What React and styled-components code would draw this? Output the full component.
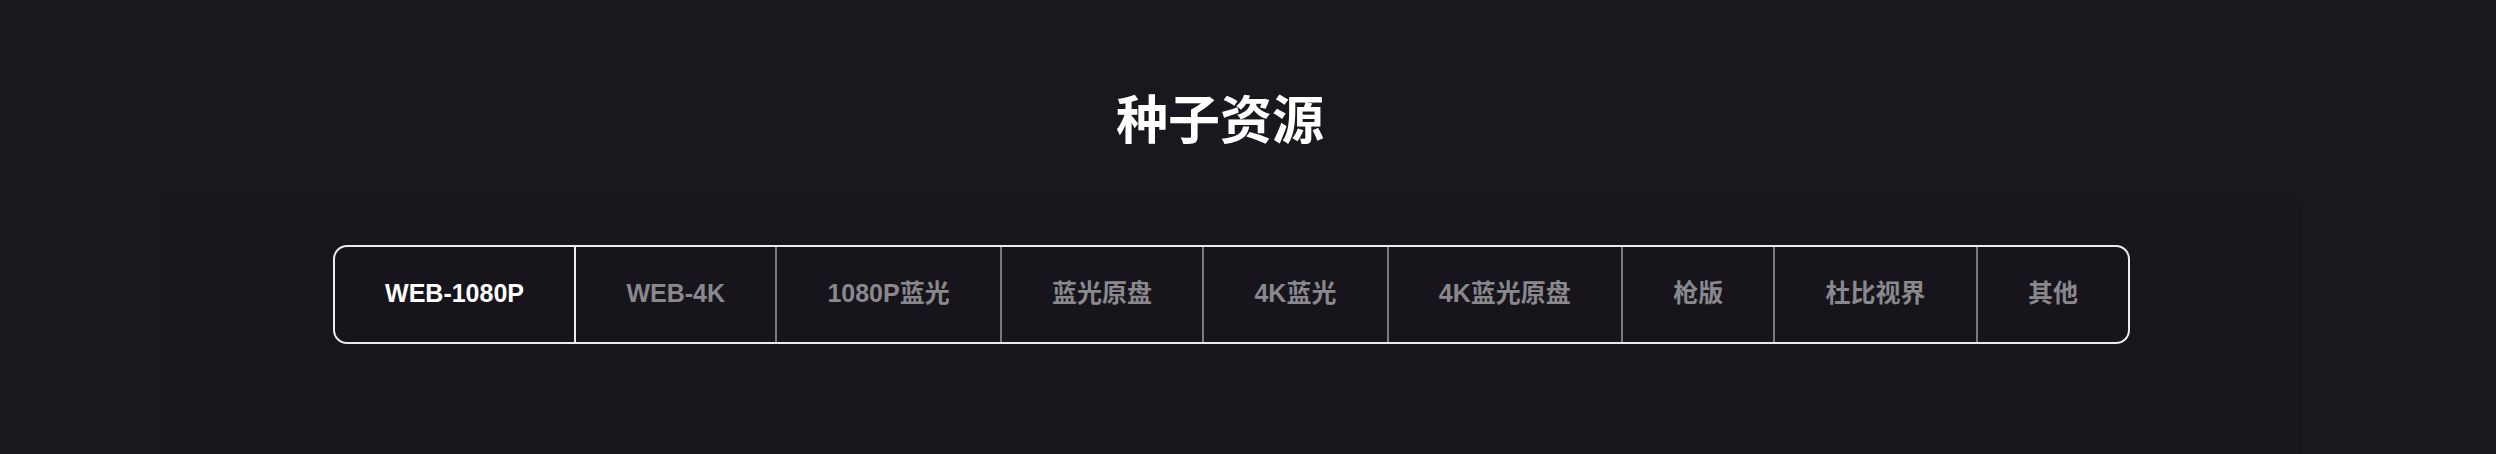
import React, { useState } from 'react';
import styled, { createGlobalStyle } from 'styled-components';

const GlobalStyle = createGlobalStyle`
    html, body {
        margin: 0;
        padding: 0;
        background: #1a181f;
    }
    body {
        font-family: "Liberation Sans", "Noto Sans CJK SC", sans-serif;
        overflow: hidden;
    }
`;

const Page = styled.div`
    min-height: 454px;
    display: flex;
    flex-direction: column;
`;

const Heading = styled.h1`
    margin: 91px 0 0;
    padding-right: 56px;
    text-align: center;
    color: #ffffff;
    font-family: "Noto Sans CJK SC", sans-serif;
    font-weight: 700;
    font-size: 52px;
    line-height: 52px;
`;

const Panel = styled.section`
    margin: 52px 193px 0 160px;
    min-height: 320px;
    padding-top: 50px;
    background: #18161c;
    border-radius: 16px 16px 0 0;
    display: flex;
    justify-content: center;
    align-items: flex-start;
`;

const TabBar = styled.div`
    display: inline-flex;
    border: 2px solid #ececec;
    border-radius: 14px;
    overflow: hidden;
    background: #17151b;
`;

const Tab = styled.button`
    height: 95px;
    padding: 0 50.2px 2px;
    border: none;
    border-right: 2px solid ${p => (p.$active ? '#ececec' : '#7a7a7e')};
    background: transparent;
    color: ${p => (p.$active ? '#ffffff' : '#89888d')};
    font-family: "Liberation Sans", "Noto Sans CJK SC", sans-serif;
    font-weight: 700;
    font-size: 25px;
    line-height: 1;
    white-space: nowrap;
    cursor: pointer;
    display: flex;
    align-items: center;
    &:last-child {
        border-right: none;
    }
`;

const tabs = ['WEB-1080P', 'WEB-4K', '1080P蓝光', '蓝光原盘', '4K蓝光', '4K蓝光原盘', '枪版', '杜比视界', '其他'];

const App = () => {
    const [active, setActive] = useState(0);

    return (
        <Page>
            <GlobalStyle />
            <Heading>种子资源</Heading>
            <Panel>
                <TabBar>
                    {tabs.map((t, i) => (
                        <Tab key={t} $active={i === active} onClick={() => setActive(i)}>
                            {t}
                        </Tab>
                    ))}
                </TabBar>
            </Panel>
        </Page>
    );
};

export default App;
